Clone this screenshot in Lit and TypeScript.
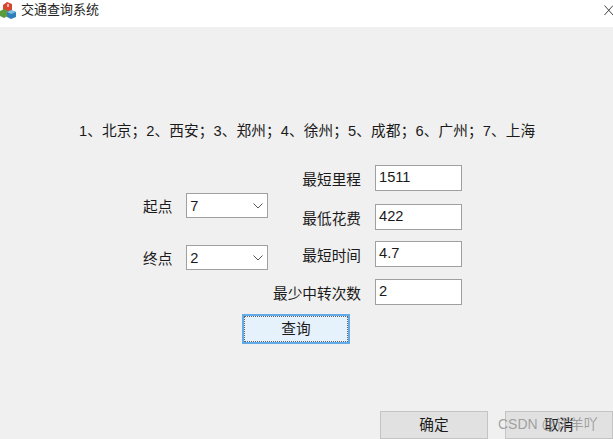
import { LitElement, html, css } from 'lit';
import { customElement } from 'lit/decorators.js';

const ROUTES = ['北京', '西安', '郑州', '徐州', '成都', '广州', '上海'];
const RESULTS = [
  { label: '最短里程', value: '1511' },
  { label: '最低花费', value: '422' },
  { label: '最短时间', value: '4.7' },
  { label: '最少中转次数', value: '2' },
];
const ENDS = [
  { label: '起点', value: '7' },
  { label: '终点', value: '2' },
];

@customElement('app-root')
export class AppRoot extends LitElement {
  static styles = css`
    :host {
      display: block;
      width: 613px;
      height: 439px;
      overflow: hidden;
      position: relative;
      background: #f0f0f0;
      color: #1a1a1a;
      font-family: "Liberation Sans", "Noto Sans CJK SC", sans-serif;
      font-size: 14.67px;
    }

    .titlebar {
      height: 27px;
      background: #fff;
      display: flex;
      align-items: flex-start;
      overflow: hidden;
    }
    .app-icon {
      width: 17px;
      height: 18px;
      margin-top: 1px;
      flex: none;
    }
    .title {
      margin-left: 4px;
      font-size: 13px;
      line-height: 20px;
      color: #222;
      flex: 1;
    }
    .close {
      width: 9px;
      height: 11px;
      margin-top: 5px;
      flex: none;
    }

    .notice {
      margin-top: 95px;
      padding-left: 79px;
      line-height: 18px;
      height: 18px;
      white-space: nowrap;
      letter-spacing: 0.1px;
    }

    .form {
      display: flex;
      margin-top: 25px;
    }
    .ends {
      width: 268px;
      padding: 28px 0 0 143px;
      box-sizing: border-box;
      display: flex;
      flex-direction: column;
      gap: 27px;
    }
    .end {
      display: flex;
      align-items: center;
      gap: 14px;
      white-space: nowrap;
    }
    .select {
      flex: none;
      width: 82px;
      height: 25px;
      box-sizing: border-box;
      background: #fff;
      border: 1px solid #a0a0a0;
      display: flex;
      align-items: center;
      justify-content: space-between;
      padding: 0 4px 0 3px;
    }
    .chevron {
      width: 10px;
      height: 6px;
    }

    .results {
      width: 194px;
      display: flex;
      flex-direction: column;
    }
    .result {
      display: flex;
      justify-content: flex-end;
      align-items: center;
      gap: 14px;
      margin-bottom: 12px;
      white-space: nowrap;
    }
    .result:nth-child(1) {
      margin-bottom: 13px;
    }
    .result:nth-child(2) {
      margin-bottom: 11px;
    }
    .input {
      flex: none;
      width: 87px;
      height: 26px;
      box-sizing: border-box;
      background: #fff;
      border: 1px solid #a0a0a0;
      padding: 0 3px;
      line-height: 22px;
    }

    .query-row {
      padding-left: 242px;
      margin-top: -3px;
    }
    .btn {
      box-sizing: border-box;
      height: 28px;
      width: 108px;
      padding-bottom: 4px;
      background: #e1e1e1;
      border: 1px solid #c4c4c4;
      display: flex;
      align-items: center;
      justify-content: center;
      color: #1a1a1a;
    }
    .query {
      height: 30px;
      background: #e5f1fb;
      border: 2px solid #62abe6;
      outline: 1px dotted #666;
      outline-offset: -3px;
    }
    .actions {
      display: flex;
      gap: 17px;
      padding-left: 380px;
      margin-top: 67px;
    }

    .watermark {
      position: absolute;
      left: 498px;
      top: 415px;
      font-size: 14px;
      line-height: 18px;
      color: rgba(130, 130, 130, 0.7);
      white-space: nowrap;
    }
  `;

  render() {
    return html`
      <div class="titlebar">
        <svg class="app-icon" viewBox="0 0 17 18">
          <path d="M3 4l4-3 5 2v6l-4 3-5-2z" fill="#d9452f" />
          <path d="M7 3l2 0 0 3-2 0z" fill="#f3b7a8" />
          <path d="M0 10l4-2 4 2v5l-4 2-4-2z" fill="#5c9c3c" />
          <path d="M7 11l4-2 5 2v5l-5 2-4-2z" fill="#2f7fb8" />
          <path d="M7 11l4-2 5 2-5 2z" fill="#7cc0e6" />
        </svg>
        <span class="title">交通查询系统</span>
        <svg class="close" viewBox="0 0 9 11">
          <path d="M0.5 0.5L9 10M0.5 10L9 0.5" stroke="#444" stroke-width="1" fill="none" />
        </svg>
      </div>

      <div class="notice">
        ${ROUTES.map((name, i) => `${i + 1}、${name}${i < ROUTES.length - 1 ? '；' : ''}`).join('')}
      </div>

      <div class="form">
        <div class="ends">
          ${ENDS.map(
            (end) => html`
              <div class="end">
                <span>${end.label}</span>
                <div class="select">
                  <span>${end.value}</span>
                  <svg class="chevron" viewBox="0 0 10 6">
                    <path d="M0.5 0.5L5 5L9.5 0.5" stroke="#555" fill="none" />
                  </svg>
                </div>
              </div>
            `
          )}
        </div>
        <div class="results">
          ${RESULTS.map(
            (row) => html`
              <div class="result">
                <span>${row.label}</span>
                <div class="input">${row.value}</div>
              </div>
            `
          )}
        </div>
      </div>

      <div class="query-row">
        <div class="btn query">查询</div>
      </div>

      <div class="actions">
        <div class="btn">确定</div>
        <div class="btn">取消</div>
      </div>

      <div class="watermark">CSDN @详羊吖</div>
    `;
  }
}
